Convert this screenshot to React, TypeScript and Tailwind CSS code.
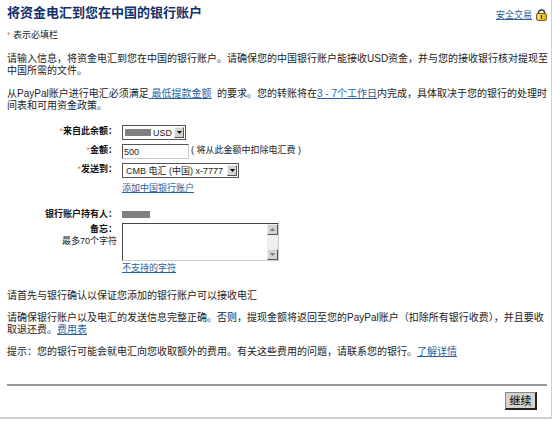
import type { ReactNode } from "react";

function TextLink({ children, className = "" }: { children: ReactNode; className?: string }) {
  return (
    <a href="#" className={`text-[#2a5f9e] underline underline-offset-1 ${className}`}>
      {children}
    </a>
  );
}

function Required() {
  return <span className="font-normal text-[#e07b39]">*</span>;
}

function LockIcon() {
  return (
    <svg viewBox="0 0 11 12" className="h-3 w-[11px]" aria-hidden="true">
      <path d="M2.5 5.5V3.6C2.5 1.6 3.8 .9 5.5 .9s3 .7 3 2.7v1.9" fill="none" stroke="#3a3d55" strokeWidth="1.5" />
      <rect x="0.6" y="4.4" width="9.8" height="7" rx="1.4" fill="#f8cb2c" stroke="#5a4716" strokeWidth="0.9" />
      <path d="M2.8 5.6v4.6" stroke="#fff0a0" strokeWidth="1.3" />
      <path d="M5.5 6v3.8" stroke="#4a3b12" strokeWidth="1.3" />
      <path d="M8.3 5.6v4.6" stroke="#e0a414" strokeWidth="1" />
    </svg>
  );
}

function Arrow({ up = false }: { up?: boolean }) {
  return (
    <svg viewBox="0 0 5 3" className="h-[3px] w-[5px]" aria-hidden="true">
      <path d={up ? "M0 3L2.5 0L5 3z" : "M0 0L2.5 3L5 0z"} fill="currentColor" />
    </svg>
  );
}

function SelectBox({
  id,
  value,
  className,
  masked = false,
}: {
  id: string;
  value: string;
  className: string;
  masked?: boolean;
}) {
  return (
    <div className={`relative h-[15px] ${className}`}>
      <select
        id={id}
        defaultValue={value}
        className={`block h-full w-full appearance-none border border-[#555] bg-white text-[9px] leading-3 text-[#222] ${masked ? "pl-[30px]" : "pl-[3px]"}`}
      >
        <option>{value}</option>
      </select>
      {masked && <span className="pointer-events-none absolute top-1 left-[3px] h-[7px] w-[26px] bg-[#808080]" />}
      <span className="pointer-events-none absolute inset-y-0.5 right-0.5 flex w-2.5 items-center justify-center border border-[#eee] border-r-[#555] border-b-[#555] bg-[#d6d3ce] text-black">
        <Arrow />
      </span>
    </div>
  );
}

function Label({ htmlFor, children }: { htmlFor: string; children: ReactNode }) {
  return (
    <label htmlFor={htmlFor} className="text-right font-bold text-[#111]">
      {children}
    </label>
  );
}

export default function App() {
  return (
    <main className="mr-px border-r border-b-2 border-[#cfcfcf] bg-white pb-[7px] pl-[7px] font-['Liberation_Sans','Noto_Sans_CJK_SC',sans-serif] text-[10px] leading-3 text-[#222]">
      <header className="flex items-start justify-between pt-[5px] pr-1">
        <h1 className="text-[13px] leading-4 font-bold text-[#12306b]">将资金电汇到您在中国的银行账户</h1>
        <div className="flex items-center gap-1 pt-1">
          <TextLink className="text-[9px]">安全交易</TextLink>
          <LockIcon />
        </div>
      </header>

      <p className="mt-2 text-[9px]">
        <Required /> 表示必填栏
      </p>

      <p className="mt-3">
        请输入信息，将资金电汇到您在中国的银行账户。请确保您的中国银行账户能接收USD资金，并与您的接收银行核对提现至中国所需的文件。
      </p>
      <p className="mt-[11px]">
        从PayPal账户进行电汇必须满足<TextLink>&nbsp;最低提款金额</TextLink>
        &nbsp; 的要求。您的转账将在<TextLink>3 - 7个工作日</TextLink>
        内完成，具体取决于您的银行的处理时间表和可用资金政策。
      </p>

      <form className="mt-[13px] text-[9px]" onSubmit={(e) => e.preventDefault()}>
        <div className="grid grid-cols-[110px_1fr] gap-x-[5px] gap-y-1">
          <Label htmlFor="balance">
            <Required />
            来自此余额：
          </Label>
          <SelectBox id="balance" value="USD" className="w-16" masked />

          <Label htmlFor="amount">
            <Required />
            金额：
          </Label>
          <div className="flex items-start">
            <input
              id="amount"
              defaultValue="500"
              className="h-[15px] w-[67px] border border-[#ccc] border-t-[#555] border-l-[#555] bg-white pl-px text-[9px] text-[#222]"
            />
            <span className="pl-0.5">( 将从此金额中扣除电汇费 )</span>
          </div>

          <Label htmlFor="recipient">
            <Required />
            发送到：
          </Label>
          <SelectBox id="recipient" value="CMB 电汇 (中国) x-7777" className="w-[117px]" />

          <div className="col-start-2">
            <TextLink>添加中国银行账户</TextLink>
          </div>
        </div>

        <div className="mt-3.5 grid grid-cols-[110px_1fr] gap-x-[5px] gap-y-[3px]">
          <span className="text-right font-bold text-[#111]">银行账户持有人：</span>
          <div className="flex items-center">
            <span className="h-[7px] w-7 bg-[#808080]" />
          </div>

          <div className="flex flex-col">
            <Label htmlFor="memo">备忘：</Label>
            <span className="text-right">最多70个字符</span>
          </div>
          <div>
            <div className="flex h-[38px] w-[157px] border border-[#ccc] border-t-[#444] border-l-[#444]">
              <textarea id="memo" maxLength={70} className="h-full flex-1 resize-none overflow-hidden bg-white p-0.5" />
              <div className="flex w-[11px] flex-col justify-between bg-[#f0efec] text-[#777]" aria-hidden="true">
                <span className="flex h-[11px] items-center justify-center border border-[#eee] border-r-[#555] border-b-[#555] bg-[#d6d3ce]">
                  <Arrow up />
                </span>
                <span className="flex h-[11px] items-center justify-center border border-[#eee] border-r-[#555] border-b-[#555] bg-[#d6d3ce]">
                  <Arrow />
                </span>
              </div>
            </div>
            <div className="pt-px">
              <TextLink>不支持的字符</TextLink>
            </div>
          </div>
        </div>

        <div className="mt-4 flex flex-col gap-2.5 text-[10px]">
          <p>请首先与银行确认以保证您添加的银行账户可以接收电汇</p>
          <p>
            请确保银行账户以及电汇的发送信息完整正确。否则，提现金额将返回至您的PayPal账户（扣除所有银行收费），并且要收取退还费。
            <TextLink>费用表</TextLink>
          </p>
          <p>
            提示：您的银行可能会就电汇向您收取额外的费用。有关这些费用的问题，请联系您的银行。
            <TextLink>了解详情</TextLink>
          </p>
        </div>

        <div className="mt-[26px] mr-1 flex justify-end border-t-2 border-[#999] pt-1.5 pr-2.5">
          <button
            type="submit"
            className="h-[18px] w-8 border border-r-2 border-b-2 border-[#888] border-r-[#222] border-b-[#222] bg-[#d6d3ce] text-[11px] leading-3 text-black"
          >
            继续
          </button>
        </div>
      </form>
    </main>
  );
}
